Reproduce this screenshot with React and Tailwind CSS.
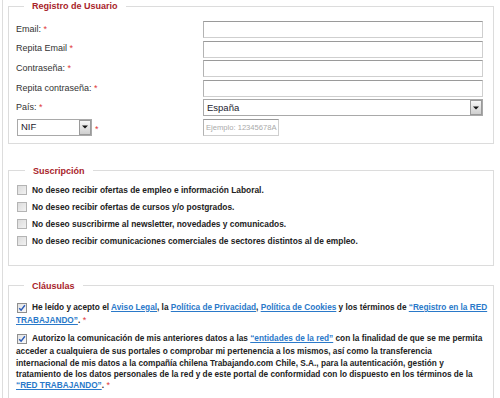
import React from 'react'

const FONT = "font-['Liberation_Sans',Arial,sans-serif]"

// ── Small pieces ──────────────────────────────────────────────────────────────
const Req = () => <span className="text-[#e0393b] text-[9px] font-normal"> *</span>

function TextBox({ placeholder, width = 'w-[280px]' }) {
  return (
    <div
      className={`${width} h-[17px] bg-white border border-[#cfcfcf] border-t-[#9a9a9a] border-l-[#b3b3b3] flex items-center px-[2px] text-[7.6px] text-[#aaaaaa] whitespace-nowrap overflow-hidden`}
    >
      {placeholder}
    </div>
  )
}

function Arrow() {
  return (
    <div className="w-[12px] h-[15px] border border-[#9a9a9a] bg-gradient-to-b from-[#f6f6f6] to-[#cfcfcf] flex items-center justify-center">
      <svg width="6" height="4" viewBox="0 0 6 4">
        <path d="M0 0.5 H6 L3 3.5 Z" fill="#111" />
      </svg>
    </div>
  )
}

function SelectBox({ value, width }) {
  return (
    <div
      className={`${width} h-[17px] bg-white border border-[#a9a9a9] flex items-center justify-between pl-[3px] text-[9.5px] text-[#1b1b2e]`}
    >
      <span>{value}</span>
      <Arrow />
    </div>
  )
}

function Check({ checked }) {
  if (!checked) {
    return (
      <span className="inline-block w-[10px] h-[10px] border border-[#b4b4b4] bg-gradient-to-br from-[#dcdcdc] to-[#f2f2f2] shrink-0" />
    )
  }
  return (
    <span className="inline-flex items-center justify-center w-[10px] h-[10px] border border-[#8e8e8e] bg-gradient-to-br from-[#e2e2e2] to-[#fafafa] align-middle my-[2px] mr-[5px] ml-[1px]">
      <svg width="8" height="8" viewBox="0 0 8 8">
        <path d="M1.2 4.2 L3.1 6.1 L6.9 1.3" fill="none" stroke="#2a5bb8" strokeWidth="1.4" />
      </svg>
    </span>
  )
}

function Legend({ children }) {
  return (
    <legend className="ml-[8px] px-[8px] text-[9px] leading-[12px] font-bold text-[#a8232a]">
      {children}
    </legend>
  )
}

const A = ({ children }) => <a className="text-[#2a79c9] underline">{children}</a>

// ── Data ──────────────────────────────────────────────────────────────────────
const FIELDS = ['Email:', 'Repita Email', 'Contraseña:', 'Repita contraseña:']

const SUBS = [
  'No deseo recibir ofertas de empleo e información Laboral.',
  'No deseo recibir ofertas de cursos y/o postgrados.',
  'No deseo suscribirme al newsletter, novedades y comunicados.',
  'No deseo recibir comunicaciones comerciales de sectores distintos al de empleo.',
]

export default function App() {
  return (
    <div className={`w-[500px] h-[398px] overflow-hidden bg-white ${FONT}`}>
      <div className="ml-[2px] h-full border-l border-[#dddddd] pl-[5px] pr-[6px]">

        {/* ── Registro de Usuario ─────────────────────────────────────── */}
        <fieldset className="border border-[#dcdcdc] pl-[7px] pt-[9px] pb-[7px]">
          <Legend>Registro de Usuario</Legend>
          <div className="flex flex-col gap-[2.6px]">
            {FIELDS.map((f) => (
              <div key={f} className="flex items-center h-[17px]">
                <div className="w-[187px] text-[9px] text-[#333]">
                  {f}<Req />
                </div>
                <TextBox />
              </div>
            ))}
            <div className="flex items-center h-[17px]">
              <div className="w-[187px] text-[9px] text-[#333]">
                País:<Req />
              </div>
              <SelectBox value="España" width="w-[280px]" />
            </div>
            <div className="flex items-center h-[17px]">
              <div className="w-[187px] flex items-center pl-[1px]">
                <SelectBox value="NIF" width="w-[75px]" />
                <span className="ml-[3px]"><Req /></span>
              </div>
              <TextBox placeholder="Ejemplo: 12345678A" width="w-[76px]" />
            </div>
          </div>
        </fieldset>

        {/* ── Suscripción ─────────────────────────────────────────────── */}
        <fieldset className="mt-[21px] border border-[#dcdcdc] pl-[8px] pt-[5px] pb-[15px]">
          <Legend>Suscripción</Legend>
          {SUBS.map((s) => (
            <div key={s} className="flex items-center gap-[5px] h-[17px] text-[8.4px] font-bold text-[#222]">
              <Check />
              {s}
            </div>
          ))}
        </fieldset>

        {/* ── Cláusulas ───────────────────────────────────────────────── */}
        <fieldset className="mt-[14px] border border-[#dcdcdc] pl-[7px] pr-[2px] pt-[9px] pb-[8px] text-[8.25px] leading-[11.3px] font-bold text-[#222]">
          <Legend>Cláusulas</Legend>
          <p>
            <Check checked />
            He leído y acepto el <A>Aviso Legal</A>, la <A>Política de Privacidad</A>,{' '}
            <A>Política de Cookies</A> y los términos de <A>“Registro en la RED TRABAJANDO”</A>.
            <Req />
          </p>
          <p className="mt-[6px]">
            <Check checked />
            Autorizo la comunicación de mis anteriores datos a las <A>“entidades de la red”</A> con
            la finalidad de que se me permita
            <br />
            acceder a cualquiera de sus portales o comprobar mi pertenencia a los mismos, así como
            la transferencia
            <br />
            internacional de mis datos a la compañía chilena Trabajando.com Chile, S.A., para la
            autenticación, gestión y
            <br />
            tratamiento de los datos personales de la red y de este portal de conformidad con lo
            dispuesto en los términos de la
            <br />
            <A>“RED TRABAJANDO”</A>.<Req />
          </p>
        </fieldset>
      </div>
    </div>
  )
}
